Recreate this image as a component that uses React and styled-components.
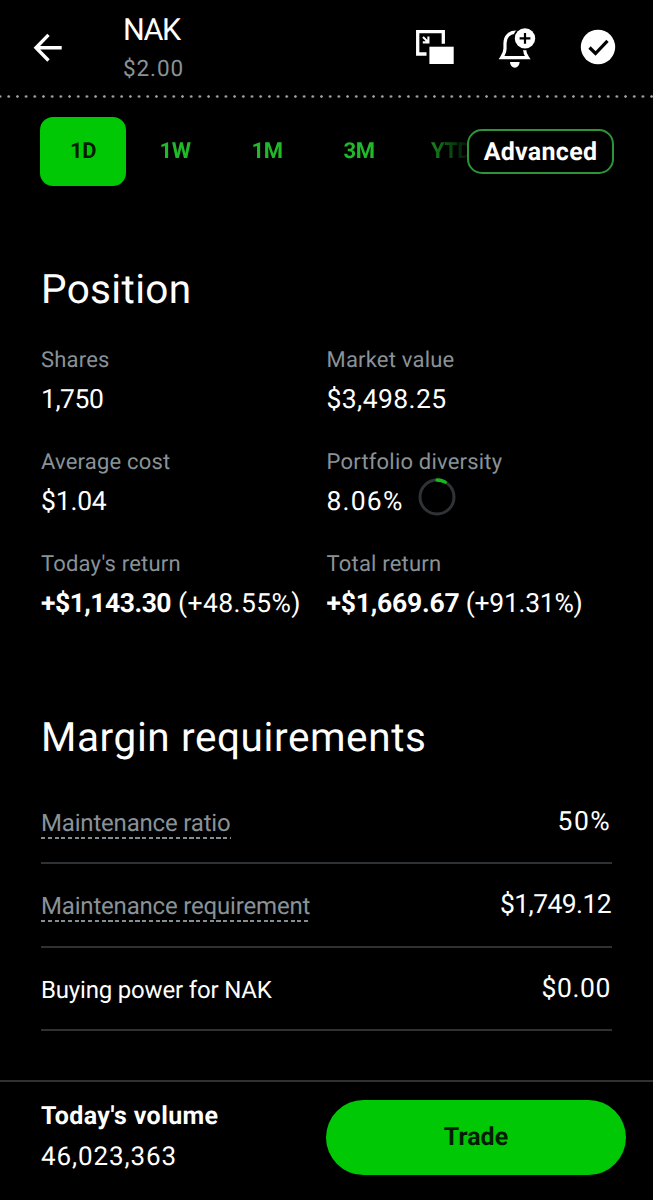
import styled, { createGlobalStyle, css } from "styled-components";

const GlobalStyle = createGlobalStyle`
  *,
  *::before,
  *::after {
    box-sizing: border-box;
  }

  body {
    margin: 0;
    background: #000;
    color: #fff;
    font-family: Roboto, "Liberation Sans", sans-serif;
    text-rendering: geometricPrecision;
  }

  button {
    font-family: inherit;
    margin: 0;
    cursor: pointer;
    text-rendering: inherit;
  }
`;

const Screen = styled.div`
  display: flex;
  flex-direction: column;
  width: 653px;
  height: 1200px;
  overflow: hidden;
`;

const Header = styled.header`
  display: flex;
  height: 98px;
  padding: 12px 37px 0 33px;
  background: radial-gradient(circle, #a6a6a6 0.9px, transparent 1.6px) -4.3px
    100% / 8.7px 3px repeat-x;
`;

const IconButton = styled.button`
  display: flex;
  padding: 0;
  border: none;
  background: none;
  color: #fff;
`;

const BackButton = styled(IconButton)`
  width: 90px;
  padding-top: 20px;
`;

const Ticker = styled.div`
  flex: 1;
  padding-top: 1px;
`;

const Symbol = styled.div`
  font-size: 30.5px;
  line-height: 36px;
  letter-spacing: -1.5px;
`;

const Price = styled.div`
  margin-top: 6px;
  font-size: 22.5px;
  line-height: 28px;
  letter-spacing: 0.9px;
  color: #899297;
`;

const Actions = styled.div`
  display: flex;
  align-items: flex-start;
  padding-top: 14px;
`;

const AlertButton = styled(IconButton)`
  margin: 0 42px 0 43px;
`;

const WatchButton = styled(IconButton)`
  padding-top: 3px;
`;

const RangeBar = styled.nav`
  display: flex;
  align-items: center;
  height: 69px;
  margin-top: 19px;
  padding: 0 40px;
`;

const Ranges = styled.div`
  display: flex;
  gap: 6px;
  width: 427px;
  mask-image: linear-gradient(to right, #000 375px, transparent 433px);
`;

const Range = styled.button`
  flex: none;
  width: 86px;
  height: 69px;
  padding: 0;
  border: none;
  border-radius: 13px;
  background: none;
  color: #20b928;
  font-size: 22px;
  font-weight: 700;
  line-height: 28px;
  letter-spacing: -0.5px;

  ${(props) =>
    props.$active &&
    css`
      background: #00c805;
      color: #031c04;
    `}
`;

const Advanced = styled.button`
  flex: none;
  width: 147px;
  height: 45px;
  padding: 2px 0 0;
  border: 2px solid #2e9436;
  border-radius: 15px;
  background: #000;
  color: #fff;
  font-size: 25px;
  font-weight: 700;
  line-height: 30px;
  letter-spacing: 0.3px;
`;

const Section = styled.section`
  padding: 0 41px;
  margin-top: ${(props) => props.$top}px;
`;

const Heading = styled.h2`
  margin: 0;
  font-size: 40.5px;
  font-weight: 400;
  line-height: 48px;
  letter-spacing: ${(props) => props.$tracking}px;
`;

const Stats = styled.dl`
  display: grid;
  grid-template-columns: 285.5px 1fr;
  row-gap: 32px;
  margin: 34px 0 0;
`;

const Stat = styled.div`
  white-space: nowrap;
`;

const StatLabel = styled.dt`
  font-size: 22px;
  line-height: 28px;
  letter-spacing: 0.2px;
  color: #899297;
`;

const StatValue = styled.dd`
  display: flex;
  align-items: center;
  height: 34px;
  margin: 8px 0 0;
  font-size: 26.5px;
  line-height: 34px;
  letter-spacing: ${(props) => props.$tracking}px;
  white-space: pre;

  strong {
    font-weight: 700;
    letter-spacing: ${(props) => props.$gainTracking}px;
  }

  svg {
    margin: -10px 0 0 14px;
  }
`;

const Requirements = styled.div`
  margin-top: 20px;
`;

const Requirement = styled.div`
  display: flex;
  align-items: center;
  justify-content: space-between;
  height: 83.3px;
  padding: 3px 1px 0 0;
  border-bottom: 2px solid #2f3235;
`;

const RequirementLabel = styled.span`
  font-size: 24px;
  line-height: 28px;
  letter-spacing: -0.18px;

  ${(props) =>
    props.$info &&
    css`
      padding-bottom: 2px;
      margin-bottom: -2px;
      color: #899297;
      background: repeating-linear-gradient(
          to right,
          #858e93 0 4px,
          transparent 4px 6.75px
        )
        0 100% / 100% 2px no-repeat;
    `}
`;

const RequirementValue = styled.span`
  margin-top: -2px;
  font-size: 26.5px;
  line-height: 34px;
  letter-spacing: ${(props) => props.$tracking}px;
`;

const Footer = styled.footer`
  display: flex;
  justify-content: space-between;
  height: 120px;
  margin-top: auto;
  padding: 18px 27px 0 41px;
  border-top: 2px solid #2f3235;
`;

const VolumeLabel = styled.div`
  margin-top: 2px;
  font-size: 25px;
  font-weight: 700;
  line-height: 30px;
  letter-spacing: 0.4px;
`;

const Volume = styled.div`
  margin-top: 8px;
  font-size: 26px;
  line-height: 34px;
  letter-spacing: 0.9px;
`;

const TradeButton = styled.button`
  width: 300px;
  height: 75px;
  padding: 0 0 1px;
  border: none;
  border-radius: 38px;
  background: #00c805;
  color: #031c04;
  font-size: 25px;
  font-weight: 700;
`;

function BackIcon() {
  return (
    <svg width="32" height="32" viewBox="0 0 32 32" fill="none">
      <path
        d="M28.7 15.7H4M15.5 2.9 3 15.7l12.5 12.8"
        stroke="currentColor"
        strokeWidth="3.4"
      />
    </svg>
  );
}

function PipIcon() {
  return (
    <svg width="40" height="40" viewBox="0 0 40 40" fill="none">
      <path
        d="M11.5 28H2.7V5.7h25.6v12"
        stroke="currentColor"
        strokeWidth="3.3"
      />
      <path
        d="m8 11 5 5M13.4 10.6v5.8H7.8"
        stroke="currentColor"
        strokeWidth="2.1"
      />
      <path d="M14.4 20.7h24.3V38H14.4z" fill="currentColor" />
    </svg>
  );
}

function AlertIcon() {
  return (
    <svg width="40" height="44" viewBox="0 0 40 44" fill="none">
      <path
        d="M18 6.2C11 6.2 7 11 7 17v5.5c0 3.6-1.3 6-3.4 9.1h26c-1.8-2.6-3-5-3.2-9.1V15c0-5-3-8.8-8.4-8.8Z"
        stroke="currentColor"
        strokeWidth="3.2"
      />
      <path d="M12 36h9.6a4.8 5.8 0 0 1-9.6 0Z" fill="currentColor" />
      <circle cx="27" cy="12.4" r="11.8" fill="#000" />
      <circle cx="27" cy="12.4" r="10.2" fill="currentColor" />
      <path d="M27 7v10.8M21.6 12.4h10.8" stroke="#000" strokeWidth="2.2" />
    </svg>
  );
}

function CheckIcon() {
  return (
    <svg width="36" height="36" viewBox="0 0 36 36" fill="none">
      <circle cx="18" cy="18" r="17.2" fill="currentColor" />
      <path d="m9.5 18.5 6 6 12-12.7" stroke="#000" strokeWidth="3.2" />
    </svg>
  );
}

function DiversityRing({ percent }) {
  return (
    <svg width="38" height="38" viewBox="0 0 38 38" fill="none">
      <circle cx="19" cy="19" r="17" stroke="#303336" strokeWidth="3" />
      <circle
        cx="19"
        cy="19"
        r="17"
        stroke="#16b81c"
        strokeWidth="3.4"
        strokeLinecap="round"
        pathLength="100"
        strokeDasharray={`${percent} 100`}
        transform="rotate(-90 19 19)"
      />
    </svg>
  );
}

const ranges = ["1D", "1W", "1M", "3M", "YTD"];

const stats = [
  { label: "Shares", value: "1,750", tracking: -0.5 },
  { label: "Market value", value: "$3,498.25", tracking: 0.4 },
  { label: "Average cost", value: "$1.04", tracking: -0.2 },
  {
    label: "Portfolio diversity",
    value: "8.06%",
    percent: 8.06,
    tracking: 1.2,
  },
  {
    label: "Today's return",
    gain: "+$1,143.30",
    gainTracking: -0.5,
    value: " (+48.55%)",
    tracking: 0.4,
  },
  {
    label: "Total return",
    gain: "+$1,669.67",
    gainTracking: -0.2,
    value: " (+91.31%)",
    tracking: -0.3,
  },
];

const requirements = [
  { label: "Maintenance ratio", value: "50%", tracking: 1.4, info: true },
  {
    label: "Maintenance requirement",
    value: "$1,749.12",
    tracking: -0.6,
    info: true,
  },
  { label: "Buying power for NAK", value: "$0.00", tracking: 0.6 },
];

export default function App() {
  return (
    <>
      <GlobalStyle />
      <Screen>
        <Header>
          <BackButton aria-label="Back">
            <BackIcon />
          </BackButton>
          <Ticker>
            <Symbol>NAK</Symbol>
            <Price>$2.00</Price>
          </Ticker>
          <Actions>
            <IconButton aria-label="Picture in picture">
              <PipIcon />
            </IconButton>
            <AlertButton aria-label="Add alert">
              <AlertIcon />
            </AlertButton>
            <WatchButton aria-label="In watchlist">
              <CheckIcon />
            </WatchButton>
          </Actions>
        </Header>

        <RangeBar>
          <Ranges>
            {ranges.map((range, i) => (
              <Range key={range} $active={i === 0}>
                {range}
              </Range>
            ))}
          </Ranges>
          <Advanced>Advanced</Advanced>
        </RangeBar>

        <Section $top={79}>
          <Heading $tracking={0.35}>Position</Heading>
          <Stats>
            {stats.map((stat) => (
              <Stat key={stat.label}>
                <StatLabel>{stat.label}</StatLabel>
                <StatValue
                  $tracking={stat.tracking}
                  $gainTracking={stat.gainTracking}
                >
                  {stat.gain && <strong>{stat.gain}</strong>}
                  <span>{stat.value}</span>
                  {stat.percent && <DiversityRing percent={stat.percent} />}
                </StatValue>
              </Stat>
            ))}
          </Stats>
        </Section>

        <Section $top={92}>
          <Heading $tracking={0.6}>Margin requirements</Heading>
          <Requirements>
            {requirements.map((item) => (
              <Requirement key={item.label}>
                <RequirementLabel $info={item.info}>
                  {item.label}
                </RequirementLabel>
                <RequirementValue $tracking={item.tracking}>
                  {item.value}
                </RequirementValue>
              </Requirement>
            ))}
          </Requirements>
        </Section>

        <Footer>
          <div>
            <VolumeLabel>Today's volume</VolumeLabel>
            <Volume>46,023,363</Volume>
          </div>
          <TradeButton>Trade</TradeButton>
        </Footer>
      </Screen>
    </>
  );
}
